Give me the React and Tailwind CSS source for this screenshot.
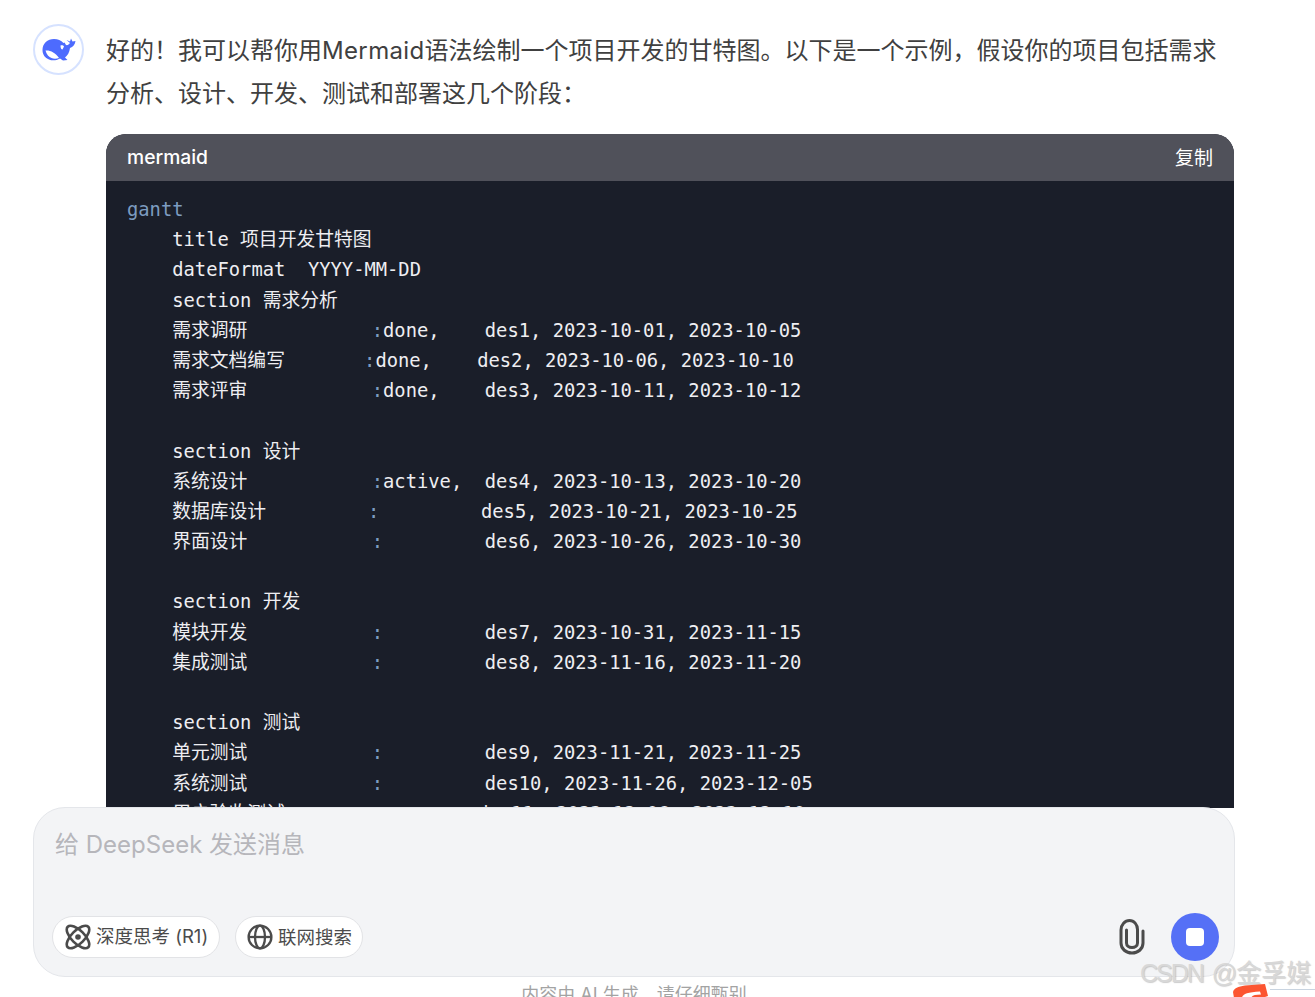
const cjk = '"Noto Sans CJK SC", sans-serif'

const codeLines = [
  ['gantt'],
  ['    title 项目开发甘特图'],
  ['    dateFormat  YYYY-MM-DD'],
  ['    section 需求分析'],
  ['    需求调研           ', ':', 'done,    des1, 2023-10-01, 2023-10-05'],
  ['    需求文档编写       ', ':', 'done,    des2, 2023-10-06, 2023-10-10'],
  ['    需求评审           ', ':', 'done,    des3, 2023-10-11, 2023-10-12'],
  [''],
  ['    section 设计'],
  ['    系统设计           ', ':', 'active,  des4, 2023-10-13, 2023-10-20'],
  ['    数据库设计         ', ':', '         des5, 2023-10-21, 2023-10-25'],
  ['    界面设计           ', ':', '         des6, 2023-10-26, 2023-10-30'],
  [''],
  ['    section 开发'],
  ['    模块开发           ', ':', '         des7, 2023-10-31, 2023-11-15'],
  ['    集成测试           ', ':', '         des8, 2023-11-16, 2023-11-20'],
  [''],
  ['    section 测试'],
  ['    单元测试           ', ':', '         des9, 2023-11-21, 2023-11-25'],
  ['    系统测试           ', ':', '         des10, 2023-11-26, 2023-12-05'],
  ['    用户验收测试       ', ':', '         des11, 2023-12-06, 2023-12-10'],
]

function Whale() {
  return (
    <svg viewBox="0 0 34 24" className="w-[34px] h-[24px]" fill="#4d6bfe">
      <path d="M0.500 12C0.500 5.500 5.500 1 12 1c4 0 7 1.500 9.500 4l1-.5 1.500 2.500c1.500.5 3-.5 4-2L24.500 2 28 3.500 29 .5l1.500 3 3-.5c-.5 3.500-2.500 6-5.500 7-.5 4.500-2.500 7.500-5 9.500l2.500 2.500-4.500.5-3-2c-3.500 2-7.500 2.500-11 1C3 20 0.500 16.500 0.500 12z" />
      <path fill="#fff" d="M3.500 12.500c4.500-.5 10 2 13.500 7.500-2.500 1-5.500 1-7.500 0-2.500-1-5-3.500-6-7.500z" />
      <path fill="#fff" d="M18.500 7.500c1.500-.5 3 0 3.500 1L20.500 11.500c-1 0-2-1-2-4z" />
    </svg>
  )
}

function AtomIcon() {
  return (
    <svg viewBox="0 0 26 26" className="w-[26px] h-[26px]" fill="none" stroke="#4b4b4b" strokeWidth="2.600">
      <ellipse cx="13" cy="13" rx="14.500" ry="6.500" transform="rotate(45 13 13)" />
      <ellipse cx="13" cy="13" rx="14.500" ry="6.500" transform="rotate(-45 13 13)" />
      <circle cx="13" cy="13" r="2.800" fill="#4b4b4b" stroke="none" />
    </svg>
  )
}

function GlobeIcon() {
  return (
    <svg viewBox="0 0 26 26" className="w-[26px] h-[26px]" fill="none" stroke="#4b4b4b" strokeWidth="2.300">
      <circle cx="13" cy="13" r="11.400" />
      <ellipse cx="13" cy="13" rx="5" ry="11.400" />
      <path d="M1.600 13h22.800" />
    </svg>
  )
}

function ClipIcon() {
  return (
    <svg viewBox="0 0 26 36" className="w-[26px] h-[36px]" fill="none" stroke="#4b4b4b" strokeWidth="3" strokeLinecap="round">
      <path d="M24 12V24C24 30 19 34 13 34S2 30 2 24V11C2 5.500 6 1.500 10.500 1.500S18.500 5.500 18.500 10.500V24C18.500 26.800 16 28.500 13 28.500S7.500 26.800 7.500 24V11" />
    </svg>
  )
}

function CsdnMark() {
  return (
    <svg viewBox="0 0 36 14" className="absolute left-[1233px] top-[984px] w-[36px] h-[14px]">
      <path fill="#fc5531" d="M0 8C1 4 5 2.500 12 1.500L32 0l3 12-6 2H1z" />
      <path fill="#fff" d="M9 14c0-3.500 5-6 18-6.500l1 3c-6 0-9 1-10 3.500z" />
    </svg>
  )
}

export default function App() {
  return (
    <div className="relative h-[997px] overflow-hidden bg-white flex flex-col" style={{ fontFamily: cjk }}>
      {/* chat area */}
      <div className="h-[808px] shrink-0 overflow-hidden pl-[33px] pr-[81px] pt-6">
        <div className="flex gap-[22px]">
          <div className="w-[51px] h-[51px] shrink-0 rounded-full border-2 border-[#d6e2ff] flex items-center justify-center">
            <Whale />
          </div>
          <div className="flex-1 min-w-0">
            <p className="mt-[5px] mb-[19px] text-[24px] leading-[43px] text-[#404040] font-['Inter','Noto_Sans_CJK_SC',sans-serif]">
              好的！我可以帮你用<span className="tracking-[0.350px]">Mermaid</span>语法绘制一个项目开发的甘特图。以下是一个示例，假设你的项目包括需求分析、设计、开发、测试和部署这几个阶段：
            </p>
            <div className="rounded-t-[20px] overflow-hidden bg-[#1a1e29]">
              <div className="h-[47px] bg-[#50515a] flex items-center justify-between px-[21px] text-white text-[19.300px]">
                <span className="font-medium font-['Inter',sans-serif]">mermaid</span>
                <span className="text-[19px]">复制</span>
              </div>
              <pre className="pl-[21px] pt-[14px] pb-10 text-[18.800px] leading-[30.200px] text-[#eeeef2] font-['DejaVu_Sans_Mono','Noto_Sans_CJK_SC',monospace]">
                {codeLines.map((l, i) => (
                  <div key={i} className="h-[30.200px]">
                    {i === 0 ? <span className="text-[#7d9cc0]">{l[0]}</span> : l[0]}
                    {l[1] && <span className="text-[#7d9cc0]">{l[1]}</span>}
                    {l[2]}
                  </div>
                ))}
              </pre>
            </div>
          </div>
        </div>
      </div>

      {/* input box */}
      <div className="-mt-px ml-[33px] w-[1202px] h-[170px] shrink-0 rounded-[32px] border border-[#e4e6ea] bg-[#f3f4f6] flex flex-col justify-between pl-[18px] pr-[15px] pt-[19px] pb-[15px] relative">
        <div className="pl-[3px] text-[24px] leading-[36px] text-[#b6b6bb] font-['Inter','Noto_Sans_CJK_SC',sans-serif]">给 DeepSeek 发送消息</div>
        <div className="flex items-center justify-between">
          <div className="flex gap-[15px] items-center">
            <div className="h-[42px] w-[168px] rounded-full bg-white border border-[#e2e3e6] flex items-center gap-[5px] pl-[12px] text-[18.500px] text-[#4b4b4b]">
              <AtomIcon />
              <span className="font-['Inter','Noto_Sans_CJK_SC',sans-serif]">深度思考 (R1)</span>
            </div>
            <div className="h-[42px] w-[128px] rounded-full bg-white border border-[#e2e3e6] flex items-center gap-[5px] pl-[11px] text-[18.500px] text-[#4b4b4b]">
              <GlobeIcon />
              <span>联网搜索</span>
            </div>
          </div>
          <div className="flex items-center gap-[26px]">
            <ClipIcon />
            <div className="w-12 h-12 rounded-full bg-[#5570f6] flex items-center justify-center">
              <div className="w-[18px] h-[18px] rounded-[4px] bg-white" />
            </div>
          </div>
        </div>
      </div>

      {/* disclaimer, cut off by the window */}
      <div className="mt-[6px] w-[1268px] text-center text-[18px] leading-[24px] text-[#a3a3a3] font-['Inter','Noto_Sans_CJK_SC',sans-serif]">内容由 AI 生成，请仔细甄别</div>

      {/* csdn watermark */}
      <div className="absolute left-[1140px] top-[955px] whitespace-nowrap text-[25px] leading-[36px] text-[#d8d8d8] [text-shadow:1px_1px_1px_rgba(130,130,130,0.400)] font-['Liberation_Sans','Noto_Sans_CJK_SC',sans-serif]">
        <span className="tracking-[-2px] mr-[2px]">CSDN</span> <span className="tracking-[-1px]">@</span>金孚媒
      </div>
      <CsdnMark />
      <div className="absolute left-[1270px] top-[989px] w-[45px] h-px bg-[#c9d4e0]" />
    </div>
  )
}
